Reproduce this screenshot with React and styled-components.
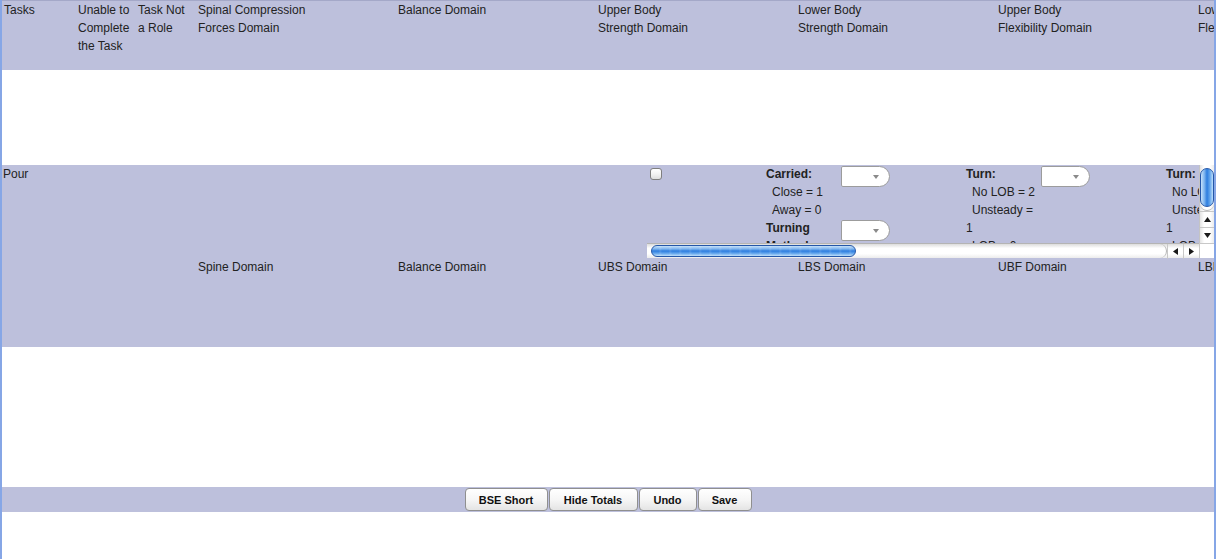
import React from "react";
import styled, { createGlobalStyle } from "styled-components";

const GlobalStyle = createGlobalStyle`
  html, body {
    margin: 0;
    padding: 0;
    background: #ffffff;
  }
  body {
    font-family: "Liberation Sans", Arial, sans-serif;
    font-size: 12px;
    color: #222222;
  }
`;

const LAVENDER = "#bdc0dc";
const COLS = "74px 60px 60px repeat(5, 200px) 1fr";

const Frame = styled.div`
  width: 1216px;
  height: 559px;
  box-sizing: border-box;
  border-left: 2px solid #86a6e6;
  border-right: 2px solid #86a6e6;
  display: flex;
  flex-direction: column;
  overflow: hidden;
`;

const HeaderRow = styled.div`
  display: grid;
  grid-template-columns: ${COLS};
  height: 70px;
  box-sizing: border-box;
  border-top: 1px solid #a4a8c8;
  background: ${LAVENDER};
`;

const HeadCell = styled.div`
  padding: 0 2px;
  line-height: 18px;
  white-space: nowrap;
  overflow: hidden;
`;

const Gap = styled.div`
  height: ${(p) => p.$h}px;
  background: #ffffff;
`;

const TaskRow = styled.div`
  height: 182px;
  background: ${LAVENDER};
  display: flex;
  flex-direction: column;
`;

const TopLine = styled.div`
  display: flex;
  height: 93px;
`;

const TaskName = styled.div`
  width: 644px;
  padding-left: 1px;
  box-sizing: border-box;
  line-height: 18px;
`;

const Pane = styled.div`
  width: 568px;
  display: grid;
  grid-template-columns: 1fr 15px;
  grid-template-rows: 78px 15px;
`;

const Viewport = styled.div`
  overflow: hidden;
  display: flex;
`;

const CheckCell = styled.div`
  flex: 0 0 120px;
  padding: 3px 0 0 4px;
  box-sizing: border-box;
`;

const CheckBox = styled.div`
  width: 12px;
  height: 12px;
  box-sizing: border-box;
  border: 1px solid #7f7f7f;
  border-radius: 3px;
  background: linear-gradient(#ffffff, #f3f3f3 50%, #dedede);
`;

const ScoreCell = styled.div`
  flex: 0 0 200px;
  display: grid;
  grid-template-columns: 75px 50px;
  grid-auto-rows: 18px;
`;

const Line = styled.div`
  grid-column: 1;
  line-height: 18px;
  white-space: nowrap;
  font-weight: ${(p) => (p.$bold ? "bold" : "normal")};
  padding-left: ${(p) => (p.$indent ? 6 : 0)}px;
`;

const Dropdown = styled.div`
  grid-column: 2;
  grid-row: ${(p) => p.$row};
  align-self: start;
  margin-top: 1px;
  width: 49px;
  height: 21px;
  box-sizing: border-box;
  background: #ffffff;
  border: 1px solid #9c9c9c;
  border-radius: 2px 11px 11px 2px;
  position: relative;

  &::after {
    content: "";
    position: absolute;
    left: 31px;
    top: 8px;
    border-left: 3.5px solid transparent;
    border-right: 3.5px solid transparent;
    border-top: 4px solid #8a8a8a;
  }
`;

const VScroll = styled.div`
  display: flex;
  flex-direction: column;
  background: linear-gradient(to right, #e4e4e4, #ffffff 30%, #ffffff 70%, #ececec);
  border-left: 1px solid #c4c4c4;
  box-sizing: border-box;
`;

const VTrack = styled.div`
  flex: 1;
  padding: 3px 0 0 0;
  border-bottom: 1px solid #b9b9b9;
  border-radius: 0 0 7px 7px;
`;

const VThumb = styled.div`
  width: 14px;
  height: 39px;
  box-sizing: border-box;
  border: 1px solid #2557a8;
  border-radius: 7px;
  background: linear-gradient(
    to right,
    #c6e1fa 0%,
    #7db4ee 28%,
    #2d7ddf 50%,
    #5ea2eb 72%,
    #bfe0fb 100%
  );
`;

const ArrowBox = styled.div`
  width: ${(p) => (p.$h ? 16 : 14)}px;
  height: ${(p) => (p.$h ? 15 : 16)}px;
  display: flex;
  align-items: center;
  justify-content: center;
  box-sizing: border-box;
  border-top: ${(p) => (p.$h ? "none" : "1px solid #c8c8c8")};
  border-left: ${(p) => (p.$h ? "1px solid #c8c8c8" : "none")};
`;

const HScroll = styled.div`
  display: flex;
  margin-left: 1px;
  border-top: 1px solid #b4b4b4;
  box-sizing: border-box;
  background: linear-gradient(#dcdcdc, #ffffff 30%, #ffffff 70%, #ececec);
`;

const HTrack = styled.div`
  flex: 1;
  padding: 1px 0 0 4px;
  border-right: 1px solid #b4b4b4;
  border-radius: 0 7px 7px 0;
`;

const HThumb = styled.div`
  width: 205px;
  height: 12px;
  box-sizing: border-box;
  border: 1px solid #2557a8;
  border-radius: 6px;
  background: repeating-linear-gradient(
      to right,
      rgba(255, 255, 255, 0) 0px,
      rgba(255, 255, 255, 0) 7px,
      rgba(255, 255, 255, 0.12) 8px,
      rgba(255, 255, 255, 0) 10px
    ),
    linear-gradient(#c6e1fa 0%, #7db4ee 30%, #2d7ddf 50%, #5ea2eb 72%, #bfe0fb 100%);
`;

const Corner = styled.div`
  background: #ffffff;
  border-top: 1px solid #c8c8c8;
  border-left: 1px solid #c8c8c8;
`;

const DomainLine = styled.div`
  display: grid;
  grid-template-columns: ${COLS};
  line-height: 18px;
`;

const DomainCell = styled.div`
  padding: 0 2px;
  white-space: nowrap;
  overflow: hidden;
`;

const ButtonBar = styled.div`
  height: 25px;
  background: ${LAVENDER};
  display: flex;
  justify-content: center;
  align-items: center;
  gap: 1px;
`;

const Button = styled.button`
  width: ${(p) => p.$w}px;
  height: 23px;
  padding: 0;
  box-sizing: border-box;
  border: 1px solid #8f8f8f;
  border-radius: 4px;
  background: linear-gradient(#ffffff, #f6f6f6 50%, #e4e4e4);
  font-family: "Liberation Sans", Arial, sans-serif;
  font-size: 11px;
  font-weight: bold;
  color: #111111;
`;

const Tri = ({ dir }) => {
  const pts = {
    up: "0,5 3.5,0 7,5",
    down: "0,0 7,0 3.5,5",
    left: "5,0 5,7 0,3.5",
    right: "0,0 0,7 5,3.5",
  }[dir];
  const horiz = dir === "left" || dir === "right";
  return (
    <svg width={horiz ? 5 : 7} height={horiz ? 7 : 5} viewBox={horiz ? "0 0 5 7" : "0 0 7 5"}>
      <polygon points={pts} fill="#1a1a1a" />
    </svg>
  );
};

const headers = [
  ["Tasks"],
  ["Unable to", "Complete", "the Task"],
  ["Task Not", "a Role"],
  ["Spinal Compression", "Forces Domain"],
  ["Balance Domain"],
  ["Upper Body", "Strength Domain"],
  ["Lower Body", "Strength Domain"],
  ["Upper Body", "Flexibility Domain"],
  ["Lower Body", "Flexibility Domain"],
];

const domains = ["", "", "", "Spine Domain", "Balance Domain", "UBS Domain", "LBS Domain", "UBF Domain", "LBF Domain"];

const turnLines = [
  { t: "Turn:", bold: true },
  { t: "No LOB = 2", indent: true },
  { t: "Unsteady =", indent: true },
  { t: "1" },
  { t: "LOB = 0", indent: true },
];

const carriedLines = [
  { t: "Carried:", bold: true },
  { t: "Close = 1", indent: true },
  { t: "Away = 0", indent: true },
  { t: "Turning", bold: true },
  { t: "Method:", bold: true },
];

const Score = ({ lines, drops }) => (
  <ScoreCell>
    {drops.map((r) => (
      <Dropdown key={r} $row={r} />
    ))}
    {lines.map((l, i) => (
      <Line key={i} $bold={l.bold} $indent={l.indent}>
        {l.t}
      </Line>
    ))}
  </ScoreCell>
);

export default function App() {
  return (
    <>
      <GlobalStyle />
      <Frame>
        <HeaderRow>
          {headers.map((lines, i) => (
            <HeadCell key={i}>
              {lines.map((l, j) => (
                <div key={j}>{l}</div>
              ))}
            </HeadCell>
          ))}
        </HeaderRow>
        <Gap $h={95} />
        <TaskRow>
          <TopLine>
            <TaskName>Pour</TaskName>
            <Pane>
              <Viewport>
                <CheckCell>
                  <CheckBox />
                </CheckCell>
                <Score lines={carriedLines} drops={[1, 4]} />
                <Score lines={turnLines} drops={[1]} />
                <Score lines={turnLines} drops={[1]} />
              </Viewport>
              <VScroll>
                <VTrack>
                  <VThumb />
                </VTrack>
                <ArrowBox>
                  <Tri dir="up" />
                </ArrowBox>
                <ArrowBox>
                  <Tri dir="down" />
                </ArrowBox>
              </VScroll>
              <HScroll>
                <HTrack>
                  <HThumb />
                </HTrack>
                <ArrowBox $h>
                  <Tri dir="left" />
                </ArrowBox>
                <ArrowBox $h>
                  <Tri dir="right" />
                </ArrowBox>
              </HScroll>
              <Corner />
            </Pane>
          </TopLine>
          <DomainLine>
            {domains.map((d, i) => (
              <DomainCell key={i}>{d}</DomainCell>
            ))}
          </DomainLine>
        </TaskRow>
        <Gap $h={140} />
        <ButtonBar>
          <Button $w={83}>BSE Short</Button>
          <Button $w={89}>Hide Totals</Button>
          <Button $w={58}>Undo</Button>
          <Button $w={54}>Save</Button>
        </ButtonBar>
      </Frame>
    </>
  );
}
